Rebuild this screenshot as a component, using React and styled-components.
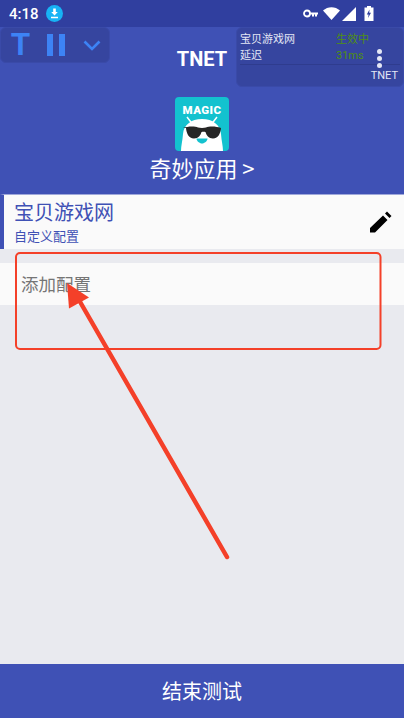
import React from 'react';
import styled, { createGlobalStyle } from 'styled-components';

const GlobalStyle = createGlobalStyle`
  html, body { margin: 0; padding: 0; }
  body { background: #e9eaef; font-family: Roboto, "Noto Sans CJK SC", sans-serif; }
  * { box-sizing: border-box; }
`;

const Screen = styled.div`
  position: relative;
  width: 404px;
  height: 718px;
  display: flex;
  flex-direction: column;
  overflow: hidden;
  background: #e9eaef;
`;

const StatusBar = styled.div`
  height: 27px;
  flex: none;
  background: #303f9f;
  display: flex;
  align-items: center;
  padding: 0 30px 0 9px;
  color: #fff;
`;

const Clock = styled.span`
  font-size: 15px;
  font-weight: 500;
  width: 37px;
`;

const StatusRight = styled.div`
  margin-left: auto;
  display: flex;
  align-items: center;
`;

const Header = styled.div`
  height: 167px;
  flex: none;
  background: #3f51b5;
  display: flex;
  flex-direction: column;
  align-items: center;
  padding-top: 18px;
`;

const HeaderTitle = styled.div`
  color: #fff;
  font-size: 20px;
  font-weight: 700;
  line-height: 28px;
`;

const AppIcon = styled.div`
  margin-top: 24px;
  width: 54px;
  height: 54px;
`;

const AppName = styled.div`
  color: #fff;
  font-size: 22px;
  line-height: 30px;
  margin-top: 1px;
  font-family: "Noto Sans CJK SC", sans-serif;
`;

const Panel = styled.div`
  position: absolute;
  top: 27px;
  background: #36459f;
  border: 1px solid #3a4aa8;
  border-radius: 6px;
`;

const ControlPanel = styled(Panel)`
  left: 0;
  width: 110px;
  height: 36px;
  display: flex;
  align-items: center;
  color: #3d83f5;
`;

const BigT = styled.span`
  font-size: 31px;
  font-weight: 700;
  line-height: 36px;
  margin-left: 10px;
  width: 36px;
  font-family: "Liberation Sans", sans-serif;
`;

const InfoPanel = styled(Panel)`
  left: 236px;
  width: 168px;
  height: 60px;
  padding: 4px 3px 0 3px;
  color: #e4e7f5;
  font-size: 11px;
`;

const InfoRow = styled.div`
  display: flex;
  line-height: 15px;
  height: 16px;
`;

const InfoLabel = styled.span`
  width: 96px;
`;

const InfoValue = styled.span`
  color: #4f8f10;
  font-size: 11px;
`;

const InfoLine = styled.div`
  height: 1px;
  background: #2f3c8e;
`;

const InfoFoot = styled.div`
  text-align: right;
  font-size: 11px;
  line-height: 14px;
  margin-top: 4px;
  padding-right: 2px;
`;

const Dots = styled.div`
  position: absolute;
  left: 140px;
  top: 21px;
  display: flex;
  flex-direction: column;
  gap: 2px;
`;

const Dot = styled.i`
  display: block;
  width: 5px;
  height: 5px;
  border-radius: 50%;
  background: #e4e7f5;
`;

const ConfigCard = styled.div`
  height: 55px;
  flex: none;
  background: #fafafa;
  border-left: 4px solid #3f51b5;
  border-top: 1px solid #9fa8da;
  display: flex;
  align-items: center;
  justify-content: space-between;
  padding: 0 12px 0 10px;
  font-family: "Noto Sans CJK SC", sans-serif;
`;

const ConfigText = styled.div`
  padding-bottom: 1px;
`;

const ConfigName = styled.div`
  color: #3f51b5;
  font-size: 20px;
  line-height: 26px;
`;

const ConfigSub = styled.div`
  color: #3f51b5;
  font-size: 13px;
  line-height: 18px;
  margin-top: 2px;
`;

const AddRow = styled.div`
  margin-top: 14px;
  height: 42px;
  flex: none;
  background: #fafafa;
  color: #757575;
  font-size: 17.5px;
  font-family: "Noto Sans CJK SC", sans-serif;
  display: flex;
  align-items: center;
  padding: 0 0 2px 21px;
`;

const Spacer = styled.div`
  flex: 1;
`;

const BottomBar = styled.div`
  height: 54px;
  flex: none;
  background: #3f51b5;
  color: #fff;
  font-size: 20px;
  font-family: "Noto Sans CJK SC", sans-serif;
  display: flex;
  align-items: center;
  justify-content: center;
  padding-bottom: 2px;
`;

const Annotation = styled.svg`
  position: absolute;
  left: 0;
  top: 0;
  pointer-events: none;
`;

const App = () => (
  <Screen>
    <GlobalStyle />
    <StatusBar>
      <Clock>4:18</Clock>
      <svg width="17" height="17" viewBox="0 0 17 17">
        <circle cx="8.5" cy="8.5" r="8.5" fill="#17b3f5" />
        <path d="M7.2 3.5h2.6v3.6h2L8.5 10.4 5.200 7.100h2zM5 11.800h7v1.500H5z" fill="#fff" />
      </svg>
      <StatusRight>
        <svg width="15" height="9" viewBox="0 0 15 9">
          <circle cx="4" cy="4.500" r="3" fill="none" stroke="#fff" strokeWidth="1.800" />
          <path d="M7 3.500h8v2h-1v2h-2v-2h-1v2H9v-2H7z" fill="#fff" />
        </svg>
        <svg width="17" height="13" viewBox="0 0 17 13" style={{ marginLeft: 5 }}>
          <path d="M0 3.500C4.800-1 12.200-1 17 3.500L8.500 13z" fill="#fff" />
        </svg>
        <svg width="14" height="14" viewBox="0 0 14 14" style={{ marginLeft: 2 }}>
          <path d="M14 0v14H0z" fill="#fff" />
        </svg>
        <svg width="10" height="15" viewBox="0 0 10 15" style={{ marginLeft: 8 }}>
          <path d="M3 0h4v1.500h2.500V15H.5V1.500H3z" fill="#fff" />
          <path d="M5.500 3.500 2.800 8.500h1.800l-.6 3.500 3-5.300H5.200z" fill="#303f9f" />
        </svg>
      </StatusRight>
    </StatusBar>

    <Header>
      <HeaderTitle>TNET</HeaderTitle>
      <AppIcon>
        <svg width="54" height="54" viewBox="0 0 54 54">
          <rect width="54" height="54" rx="4" fill="#13c2cf" />
          <text x="27" y="16.500" textAnchor="middle" fontFamily="Roboto, sans-serif" fontWeight="900" fontSize="11.500" fill="#fff" letterSpacing="0.4">MAGIC</text>
          <path d="M12 20l5 6.500M42 20l-5 6.500" stroke="#fff" strokeWidth="1.500" />
          <path d="M6 54c0-5 1.500-10 2-17 .8-9 8-15 19-15s18.200 6 19 15c.5 7 2 12 2 17z" fill="#fff" />
          <path d="M8 31c5-2 12-2 15-.5 2 .6 6 .6 8 0 3-1.500 10-1.500 15 .5-.5 5-2.500 10.500-8 10.500-4.500 0-6.500-3-7.500-6.500-1-.5-3-.5-4 0-1 3.500-3 6.500-7.500 6.500-5.500 0-7.500-5.500-8-10.500z" fill="#262626" />
          <path d="M21.500 41.500h11c0 2.500-3 5-5.500 5s-5.500-2.500-5.500-5z" fill="#13c2cf" />
        </svg>
      </AppIcon>
      <AppName>奇妙应用 &gt;</AppName>
    </Header>

    <ControlPanel>
      <BigT>T</BigT>
      <svg width="18" height="22" viewBox="0 0 18 22">
        <path d="M0 0h6v22H0zM12 0h6v22h-6z" fill="currentColor" />
      </svg>
      <svg width="18" height="11" viewBox="0 0 18 11" style={{ marginLeft: 18 }}>
        <path d="M1.500 1.500 9 9l7.500-7.500" fill="none" stroke="currentColor" strokeWidth="2.600" />
      </svg>
    </ControlPanel>

    <InfoPanel>
      <InfoRow>
        <InfoLabel>宝贝游戏网</InfoLabel>
        <InfoValue>生效中</InfoValue>
      </InfoRow>
      <InfoRow>
        <InfoLabel>延迟</InfoLabel>
        <InfoValue>31ms</InfoValue>
      </InfoRow>
      <InfoLine />
      <InfoFoot>TNET</InfoFoot>
      <Dots>
        <Dot />
        <Dot />
        <Dot />
      </Dots>
    </InfoPanel>

    <ConfigCard>
      <ConfigText>
        <ConfigName>宝贝游戏网</ConfigName>
        <ConfigSub>自定义配置</ConfigSub>
      </ConfigText>
      <svg width="22" height="22" viewBox="0 0 22 22" fill="#000">
        <path d="M0 21.500V17L13 4.500l4.500 4.500L5 21.500zM15 2.500 17 .5l4.500 4.500-2 2z" />
      </svg>
    </ConfigCard>

    <AddRow>添加配置</AddRow>
    <Spacer />
    <BottomBar>结束测试</BottomBar>

    <Annotation width="404" height="718" viewBox="0 0 404 718">
      <rect x="16" y="253" width="364.500" height="96" rx="4" fill="none" stroke="#f44029" strokeWidth="2" />
      <path d="M227 557 79 300" stroke="#f44029" strokeWidth="4.500" strokeLinecap="round" />
      <path d="M67 283l22 14.500-20 11z" fill="#f44029" />
    </Annotation>
  </Screen>
);

export default App;
